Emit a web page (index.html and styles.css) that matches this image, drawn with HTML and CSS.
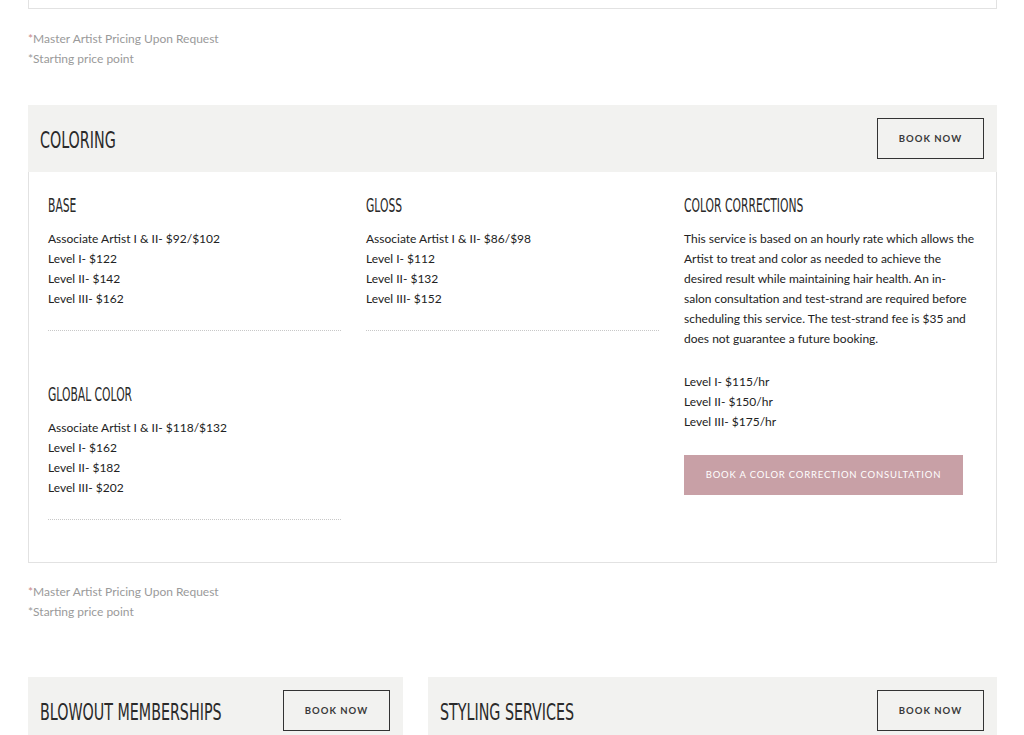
FILE: index.html
```html
<!DOCTYPE html>
<html>
<head>
  <meta charset="utf-8" />
  <title>Services</title>
  <link rel="stylesheet" href="styles.css">
</head>
<body>
  <div class="page">
    <div class="prev-box"></div>
    <div class="notes">
      <p><span class="star">*</span>Master Artist Pricing Upon Request</p>
      <p>*Starting price point</p>
    </div>

    <section class="service">
      <div class="service-head">
        <h2 class="service-title"><span>COLORING</span></h2>
        <a href="#" class="book-btn">BOOK NOW</a>
      </div>
      <div class="service-body">
        <div class="col">
          <div class="item">
            <h3 class="item-title"><span>BASE</span></h3>
            <ul class="prices">
              <li>Associate Artist I &amp; II- $92/$102</li>
              <li>Level I- $122</li>
              <li>Level II- $142</li>
              <li>Level III- $162</li>
            </ul>
          </div>
          <div class="item">
            <h3 class="item-title"><span>GLOBAL COLOR</span></h3>
            <ul class="prices">
              <li>Associate Artist I &amp; II- $118/$132</li>
              <li>Level I- $162</li>
              <li>Level II- $182</li>
              <li>Level III- $202</li>
            </ul>
          </div>
        </div>
        <div class="col">
          <div class="item">
            <h3 class="item-title"><span>GLOSS</span></h3>
            <ul class="prices">
              <li>Associate Artist I &amp; II- $86/$98</li>
              <li>Level I- $112</li>
              <li>Level II- $132</li>
              <li>Level III- $152</li>
            </ul>
          </div>
        </div>
        <div class="col">
          <h3 class="item-title"><span>COLOR CORRECTIONS</span></h3>
          <p class="desc">This service is based on an hourly rate which allows the Artist to treat and color as needed to achieve the desired result while maintaining hair health. An in-<br>salon consultation and test-strand are required before scheduling this service. The test-strand fee is $35 and does not guarantee a future booking.</p>
          <ul class="prices">
            <li>Level I- $115/hr</li>
            <li>Level II- $150/hr</li>
            <li>Level III- $175/hr</li>
          </ul>
          <a href="#" class="consult-btn">BOOK A COLOR CORRECTION CONSULTATION</a>
        </div>
      </div>
    </section>

    <div class="notes notes-after">
      <p><span class="star">*</span>Master Artist Pricing Upon Request</p>
      <p>*Starting price point</p>
    </div>

    <div class="bottom-row">
      <section class="service">
        <div class="service-head">
          <h2 class="service-title"><span>BLOWOUT MEMBERSHIPS</span></h2>
          <a href="#" class="book-btn">BOOK NOW</a>
        </div>
      </section>
      <section class="service">
        <div class="service-head">
          <h2 class="service-title"><span>STYLING SERVICES</span></h2>
          <a href="#" class="book-btn">BOOK NOW</a>
        </div>
      </section>
    </div>
  </div>
</body>
</html>
```

FILE: styles.css
```css
body {
  margin: 0;
  font-family: Lato, "Open Sans", sans-serif;
  color: #222;
  background: #fff;
}

.page {
  padding: 0 27px 0 28px;
}

.prev-box {
  height: 8px;
  border: 1px solid #e2e2e2;
  border-top: none;
}

.notes {
  margin: 20px 0 36px;
  font-size: 12px;
  line-height: 20px;
  color: #9a9a9a;
}

.notes p {
  margin: 0;
}

.notes .star {
  color: #c98a8a;
}

.notes-after {
  margin: 19px 0 55px;
}

.service-head {
  display: flex;
  align-items: center;
  justify-content: space-between;
  background-color: #f2f2f0;
  padding: 13px 13px 13px 12px;
}

.service-title {
  flex: 1 1 auto;
  min-width: 0;
  margin: 3px 0 0;
  height: 38px;
  font-family: "Liberation Sans Narrow", "DejaVu Sans Condensed", sans-serif;
  font-weight: normal;
  font-size: 23px;
  line-height: 38px;
  color: #2a2a2a;
  white-space: nowrap;
  overflow: visible;
}

.service-title span,
.item-title span {
  display: inline-block;
  transform: scaleX(0.69);
  transform-origin: left center;
}

.item-title span {
  transform: scaleX(0.63);
}

.book-btn {
  flex-shrink: 0;
  display: inline-block;
  width: 105px;
  height: 39px;
  line-height: 39px;
  border: 1px solid #333;
  text-align: center;
  font-size: 9.5px;
  font-weight: bold;
  letter-spacing: 1px;
  color: #3a3a3a;
  text-decoration: none;
}

.service-body {
  display: grid;
  grid-template-columns: repeat(3, 1fr);
  column-gap: 25px;
  padding: 22px 19px 42px 19px;
  border: 1px solid #e2e2e2;
  border-top: none;
}

.item {
  padding-bottom: 21px;
  border-bottom: 1px dotted #c8c8c8;
}

.item + .item {
  margin-top: 52px;
}

.item-title {
  margin: 0 0 13px;
  font-family: "Liberation Sans Narrow", "DejaVu Sans Condensed", sans-serif;
  font-weight: normal;
  font-size: 19px;
  line-height: 22px;
  color: #2a2a2a;
  white-space: nowrap;
}

.prices {
  list-style: none;
  margin: 0;
  padding: 0;
  font-size: 12px;
  line-height: 20px;
}

.desc {
  margin: 0 0 23px;
  font-size: 12px;
  line-height: 20px;
}

.consult-btn {
  display: block;
  width: 279px;
  height: 40px;
  line-height: 40px;
  margin-top: 23px;
  background-color: #c8a0a6;
  color: #fff;
  text-align: center;
  font-size: 9.5px;
  letter-spacing: 0.8px;
  text-decoration: none;
}

.bottom-row {
  display: grid;
  grid-template-columns: 375px 1fr;
  column-gap: 25px;
}
```
